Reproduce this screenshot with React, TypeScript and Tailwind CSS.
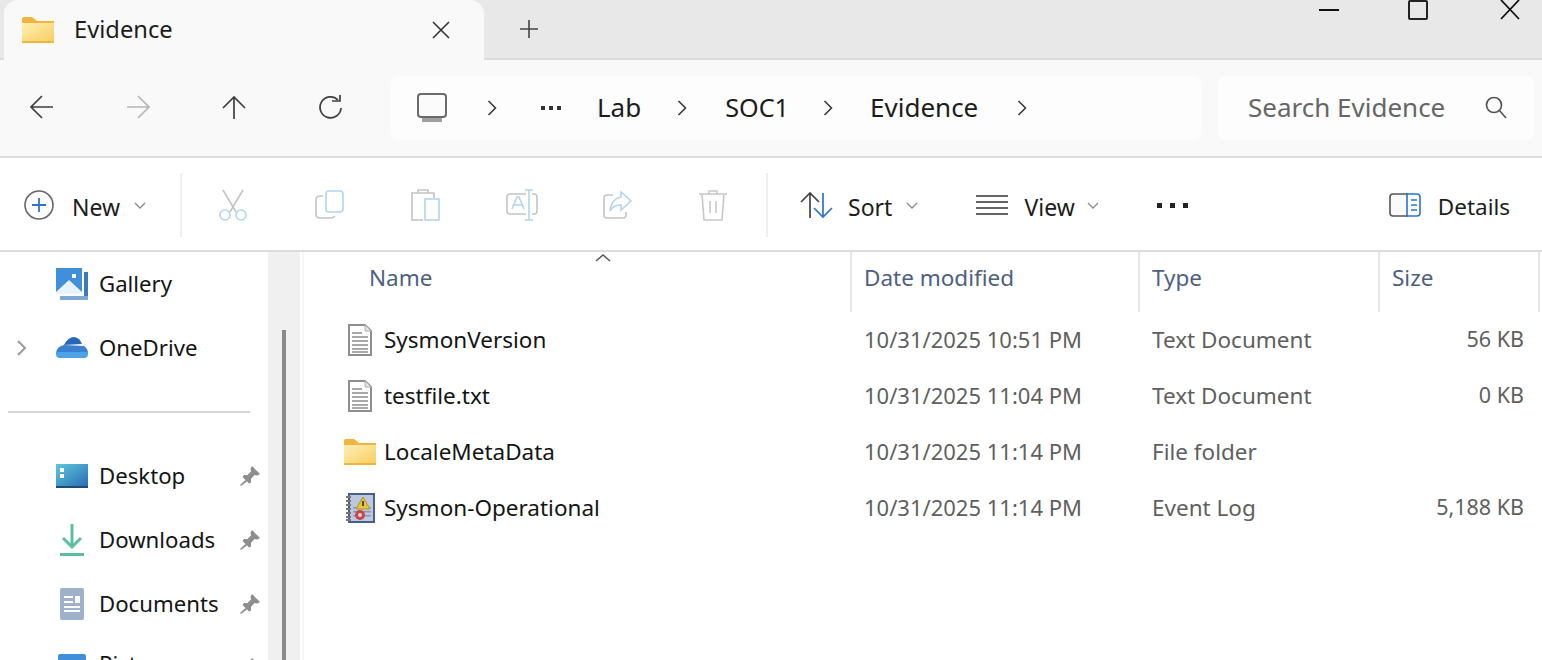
import React from "react";

const Chevron = ({ className = "" }: { className?: string }) => (
  <svg width="10" height="18" viewBox="0 0 10 18" className={className} fill="none" stroke="#3a3a3a" strokeWidth="1.6">
    <path d="M1.5 2 L8.5 9 L1.5 16" />
  </svg>
);

const Down = () => (
  <svg width="12" height="7" viewBox="0 0 12 7" fill="none" stroke="#8a8a8a" strokeWidth="1.3">
    <path d="M1 1 L6 6 L11 1" />
  </svg>
);

const Folder = () => (
  <svg width="32" height="26" viewBox="0 0 32 26">
    <defs>
      <linearGradient id="fg" x1="0" y1="0" x2="1" y2="1">
        <stop offset="0" stopColor="#fdeeb5" />
        <stop offset="1" stopColor="#f8cf62" />
      </linearGradient>
    </defs>
    <path d="M0 2 Q0 0 2 0 H10 L15 4 H32 V26 H0 Z" fill="#eeb53f" />
    <rect x="0" y="6" width="32" height="18" fill="url(#fg)" />
  </svg>
);

const TextFile = () => (
  <svg width="24" height="32" viewBox="0 0 24 32">
    <path d="M1 1 H17 L23 7 V31 H1 Z" fill="#fff" stroke="#8f8f8f" strokeWidth="2" />
    <path d="M17 1 V7 H23" fill="#e3e3e3" stroke="#b0b0b0" />
    {[8, 12, 16, 20, 24, 27].map((y) => (
      <rect key={y} x="4" y={y} width={y === 8 ? 10 : 16} height="2" fill="#a9a9a9" />
    ))}
  </svg>
);

const EventLog = () => (
  <svg width="30" height="30" viewBox="0 0 30 30">
    <rect x="4" y="1" width="25" height="28" fill="#bcc8e0" stroke="#4a5d8f" strokeWidth="2" />
    {[3, 7, 11, 15, 19, 23, 26].map((y) => (
      <rect key={y} x="1" y={y} width="5" height="2" fill="#777" />
    ))}
    {[14, 18, 22].map((y) => (
      <rect key={y} x="8" y={y} width="18" height="1.5" fill="#8796bb" />
    ))}
    <path d="M18 4 L25 16 H11 Z" fill="#e8c33c" stroke="#b3932a" />
    <rect x="17.2" y="8" width="1.6" height="5" fill="#333" />
    <circle cx="15" cy="22" r="5" fill="#c8434b" />
    <circle cx="15" cy="22" r="2" fill="#f1d5d6" />
  </svg>
);

const Pin = () => (
  <svg width="22" height="22" viewBox="0 0 22 22" fill="#8e8e8e">
    <path d="M13 1 L21 9 L18.5 10.5 L15.5 10 L12 14 L12 17.5 L10 18.5 L3.5 12 L5 10 L8.5 10 L12 6.5 L11.5 3.5 Z" />
    <path d="M6.5 15 L8 16.5 L2 21 L1 20 Z" />
  </svg>
);

const SideRow = ({ icon, label, chevron, pin, labelClass = "" }: { icon: React.ReactNode; label: string; chevron?: boolean; pin?: boolean; labelClass?: string }) => (
  <div className="flex h-[64px] items-center">
    <div className="flex w-[56px] justify-center pl-[8px] pr-[20px]">
      {chevron && (
        <svg width="12" height="18" viewBox="0 0 12 18" fill="none" stroke="#9a9a9a" strokeWidth="2" className="shrink-0">
          <path d="M2 2 L9 9 L2 16" />
        </svg>
      )}
    </div>
    <div className="flex w-[32px] shrink-0 justify-center">{icon}</div>
    <span className={`ml-[11px] text-[22.2px] text-[#141414] ${labelClass}`}>{label}</span>
    {pin && (
      <span className="ml-auto mr-[7px] flex">
        <Pin />
      </span>
    )}
  </div>
);

const ToolSlot = ({ children, className = "" }: { children: React.ReactNode; className?: string }) => (
  <div className={`flex h-[36px] w-[40px] items-center justify-center ${className}`}>{children}</div>
);

const rows = [
  { icon: <TextFile />, name: "SysmonVersion", date: "10/31/2025 10:51 PM", type: "Text Document", size: "56 KB" },
  { icon: <TextFile />, name: "testfile.txt", date: "10/31/2025 11:04 PM", type: "Text Document", size: "0 KB" },
  { icon: <Folder />, name: "LocaleMetaData", date: "10/31/2025 11:14 PM", type: "File folder", size: "" },
  { icon: <EventLog />, name: "Sysmon-Operational", date: "10/31/2025 11:14 PM", type: "Event Log", size: "5,188 KB" },
];

export default function App() {
  return (
    <div className="flex h-[660px] w-[1542px] flex-col overflow-hidden bg-white font-['Noto_Sans',sans-serif] text-[22.5px] leading-[30px] text-[#1c1c1c]">
      {/* Tab strip */}
      <div className="flex h-[60px] shrink-0 items-start border-b-2 border-[#dcdcdc] bg-[#e8e8e8]">
        <div className="ml-[4px] flex h-[60px] w-[480px] items-center rounded-t-[14px] bg-[#f9f9f9] pl-[18px]">
          <Folder />
          <span className="ml-[20px] pb-[2px] text-[23.7px]">Evidence</span>
          <svg width="20" height="20" viewBox="0 0 20 20" className="ml-auto mr-[33px]" fill="none" stroke="#333" strokeWidth="1.6">
            <path d="M2 2 L18 18 M18 2 L2 18" />
          </svg>
        </div>
        <svg width="20" height="20" viewBox="0 0 20 20" className="ml-[35px] mt-[19px]" fill="none" stroke="#444" strokeWidth="1.6">
          <path d="M10 1 V19 M1 10 H19" />
        </svg>
        <div className="ml-auto flex h-[20px] items-start">
          <div className="mt-[9px] h-[2px] w-[20px] bg-[#111]" />
          <div className="ml-[69px] h-[20px] w-[20px] rounded-[2px] border-2 border-[#222]" />
          <svg width="20" height="20" viewBox="0 0 20 20" className="ml-[72px] mr-[22px]" fill="none" stroke="#111" strokeWidth="1.8">
            <path d="M1 0 L19 19 M19 0 L1 19" />
          </svg>
        </div>
      </div>

      {/* Navigation */}
      <div className="flex h-[98px] shrink-0 items-center border-b-2 border-[#dcdcdc] bg-[#f9f9f9] pl-[18px] text-[26px]">
        {[
          <path key="a" d="M2 12 H24 M13 1 L2 12 L13 23" />,
          <path key="b" d="M2 12 H24 M13 1 L24 12 L13 23" stroke="#b5b5b5" />,
          <path key="c" d="M13 24 V2 M2 13 L13 2 L24 13" />,
          <g key="d">
            <path d="M21 5 A10.5 10.5 0 1 0 24 13" />
            <path d="M15 5 H23 V-1" transform="translate(0 1)" />
          </g>,
        ].map((icon, i) => (
          <div key={i} className={`flex h-[48px] w-[48px] items-center justify-center ${i < 3 ? "mr-[48px]" : ""}`}>
            <svg width="26" height="26" viewBox="0 0 26 26" fill="none" stroke="#3f3f3f" strokeWidth="1.7">
              {icon}
            </svg>
          </div>
        ))}
        <div className="ml-[36px] flex h-[64px] w-[812px] items-center rounded-[8px] bg-[#fdfdfd] pl-[27px]">
          <svg width="30" height="30" viewBox="0 0 30 30" fill="none">
            <rect x="1" y="1" width="28" height="23" rx="3" stroke="#6a6a6a" strokeWidth="2" fill="#fbfbfb" />
            <rect x="5" y="25" width="20" height="4" fill="#a0a0a0" />
          </svg>
          <Chevron className="ml-[40px]" />
          <span className="ml-[44px] flex gap-[4px]">
            {[0, 1, 2].map((d) => (
              <span key={d} className="h-[4px] w-[4px] bg-[#333]" />
            ))}
          </span>
          <span className="ml-[36px] pb-[2px]">Lab</span>
          <Chevron className="ml-[36px]" />
          <span className="ml-[38px] pb-[2px] text-[25.2px]">SOC1</span>
          <Chevron className="ml-[34px]" />
          <span className="ml-[37px] pb-[2px]">Evidence</span>
          <Chevron className="ml-[39px]" />
        </div>
        <div className="ml-[16px] flex h-[64px] w-[316px] items-center rounded-[8px] bg-[#fdfdfd] pl-[30px] text-[#666]">
          <span className="pb-[2px]">Search Evidence</span>
          <svg width="22" height="24" viewBox="0 0 22 24" className="ml-auto mr-[27px]" fill="none" stroke="#555" strokeWidth="1.7">
            <circle cx="9" cy="9" r="7.5" />
            <path d="M14 14 L21 22" />
          </svg>
        </div>
      </div>

      {/* Command bar */}
      <div className="flex h-[94px] shrink-0 items-center border-b-2 border-[#dcdcdc] bg-white pl-[24px] pt-[2px] text-[23px]">
        <svg width="30" height="30" viewBox="0 0 30 30" fill="none">
          <circle cx="15" cy="15" r="14" stroke="#666" strokeWidth="1.6" />
          <path d="M15 8 V22 M8 15 H22" stroke="#2b74d0" strokeWidth="1.8" />
        </svg>
        <span className="ml-[18px] mt-[4px]">New</span>
        <span className="ml-[14px] flex"><Down /></span>
        <div className="ml-[34px] mr-[31px] h-[64px] w-[2px] bg-[#efefef]" />
        <ToolSlot>
          <svg width="30" height="32" viewBox="0 0 30 32" fill="none" strokeWidth="1.6">
            <path d="M5 1 L18 23 M25 1 L12 23" stroke="#c4c4c4" />
            <circle cx="7" cy="26" r="5" stroke="#b4d3f1" />
            <circle cx="23" cy="26" r="5" stroke="#b4d3f1" />
          </svg>
        </ToolSlot>
        <ToolSlot className="ml-[57px]">
          <svg width="30" height="30" viewBox="0 0 30 30" fill="none" strokeWidth="1.6">
            <path d="M8 6 H5 Q1 6 1 10 V24 Q1 28 5 28 H15 Q18 28 20 26" stroke="#c4c4c4" />
            <rect x="11" y="1" width="17" height="21" rx="3" stroke="#b4d3f1" />
          </svg>
        </ToolSlot>
        <ToolSlot className="ml-[56px]">
          <svg width="30" height="32" viewBox="0 0 30 32" fill="none" strokeWidth="1.6">
            <path d="M12 31 H1 V4 H23 V9 M7 4 V1 H17 V4" stroke="#c4c4c4" />
            <rect x="14" y="10" width="14" height="21" stroke="#b4d3f1" />
          </svg>
        </ToolSlot>
        <ToolSlot className="ml-[56px]">
          <svg width="32" height="32" viewBox="0 0 32 32" fill="none" strokeWidth="1.6">
            <path d="M20 5 H4 Q1 5 1 8 V22 Q1 25 4 25 H20 M26 5 H28 Q31 5 31 8 V22 Q31 25 28 25 H26" stroke="#c4c4c4" />
            <path d="M19 1 H27 M23 1 V31 M19 31 H27 M6 20 L11 8 H13 L18 20 M8 16 H16" stroke="#b4d3f1" />
          </svg>
        </ToolSlot>
        <ToolSlot className="ml-[56px]">
          <svg width="30" height="30" viewBox="0 0 30 30" fill="none" strokeWidth="1.6">
            <path d="M10 5 H4 Q1 5 1 8 V25 Q1 28 4 28 H20 Q23 28 23 25 V22" stroke="#c4c4c4" />
            <path d="M18 2 L28 11 L18 20 V15 Q10 15 7 21 Q8 9 18 7 Z" stroke="#b4d3f1" />
          </svg>
        </ToolSlot>
        <ToolSlot className="ml-[55px]">
          <svg width="30" height="32" viewBox="0 0 30 32" fill="none" stroke="#c8c8c8" strokeWidth="1.6">
            <path d="M1 5 H29 M11 5 V2 H19 V5 M4 5 L6 31 H24 L26 5 M12 12 V24 M18 12 V24" />
          </svg>
        </ToolSlot>
        <div className="ml-[33px] mr-[32px] h-[64px] w-[2px] bg-[#efefef]" />
        <svg width="34" height="28" viewBox="0 0 34 28" fill="none" strokeWidth="1.7">
          <path d="M10 27 V2 M1 11 L10 2 L19 11" stroke="#444" />
          <path d="M23 2 V26 M14 17 L23 26 L32 17" stroke="#2b74d0" />
        </svg>
        <span className="ml-[14px] mt-[4px]">Sort</span>
        <span className="ml-[14px] flex"><Down /></span>
        <svg width="32" height="22" viewBox="0 0 32 22" className="ml-[58px]" stroke="#333" strokeWidth="1.6">
          <path d="M0 2 H32 M0 8 H32 M0 14 H32 M0 20 H32" />
        </svg>
        <span className="ml-[16px] mt-[4px]">View</span>
        <span className="ml-[12px] flex"><Down /></span>
        <span className="ml-[58px] flex gap-[8px]">
          {[0, 1, 2].map((d) => (
            <span key={d} className="h-[5px] w-[5px] bg-[#222]" />
          ))}
        </span>
        <svg width="32" height="24" viewBox="0 0 32 24" className="ml-[201px]" fill="none" strokeWidth="1.6">
          <path d="M19 1 H4 Q1 1 1 4 V20 Q1 23 4 23 H19" stroke="#555" fill="#fafafa" />
          <path d="M18 1 H28 Q31 1 31 4 V20 Q31 23 28 23 H18 Z" stroke="#2b74d0" />
          <path d="M22 7 H28 M22 12 H28 M22 17 H28" stroke="#2b74d0" />
        </svg>
        <span className="ml-[17px] mt-[4px] text-[22.5px]">Details</span>
      </div>

      {/* Body */}
      <div className="flex min-h-0 flex-1">
        <aside className="w-[268px] shrink-0">
          <SideRow
            label="Gallery"
            icon={
              <svg width="32" height="32" viewBox="0 0 32 32">
                <rect x="0" y="0" width="26" height="26" fill="#3f8fdb" />
                <rect x="28" y="4" width="4" height="28" fill="#3b78bf" />
                <rect x="4" y="28" width="28" height="4" fill="#7ea7d4" />
                <path d="M0 24 L13 12 L26 24 V26 H0 Z" fill="#eaf3fc" />
                <rect x="16" y="6" width="4" height="4" fill="#fff" />
              </svg>
            }
          />
          <SideRow
            label="OneDrive"
            chevron
            icon={
              <svg width="32" height="22" viewBox="0 0 32 22">
                <path d="M8 8 Q12 0 18 0 Q24 1 26 7 Z" fill="#2a66b8" />
                <path d="M0 16 Q1 9 8 8 L28 9 Q32 12 32 16 Z" fill="#3b80cf" />
                <path d="M0 15 H32 V17 Q32 21 28 21 H4 Q0 21 0 17 Z" fill="#4ea2e6" />
              </svg>
            }
          />
          <div className="mt-[31px] ml-[8px] h-[2px] w-[242px] bg-[#d4d4d4]" />
          <div className="h-[31px]" />
          <SideRow
            label="Desktop"
            pin
            icon={
              <svg width="32" height="24" viewBox="0 0 32 24">
                <defs>
                  <linearGradient id="dk" x1="0" y1="0" x2="1" y2="1">
                    <stop offset="0" stopColor="#5ec8dc" />
                    <stop offset="1" stopColor="#2a6db5" />
                  </linearGradient>
                </defs>
                <rect width="32" height="22" y="0" fill="url(#dk)" />
                <rect y="22" width="32" height="2" fill="#1f4d6e" />
                <rect x="4" y="4" width="4" height="4" fill="#fff" />
                <rect x="4" y="10" width="4" height="4" fill="#fff" />
              </svg>
            }
          />
          <SideRow
            label="Downloads"
            pin
            icon={
              <svg width="24" height="32" viewBox="0 0 24 32" fill="none" stroke="#5bbf9c" strokeWidth="3">
                <path d="M12 0 V23 M3 14 L12 23 L21 14 M0 30.5 H24" />
              </svg>
            }
          />
          <SideRow
            label="Documents"
            pin
            icon={
              <svg width="24" height="32" viewBox="0 0 24 32">
                <rect width="24" height="32" rx="2" fill="#9fb0cb" />
                <path d="M4 9 H13 M4 14 H13 M4 19 H20 M4 23 H20" stroke="#fff" strokeWidth="2" />
                <rect x="15" y="8" width="5" height="7" fill="#fff" />
              </svg>
            }
          />
          <SideRow
            label="Pictures"
            pin
            labelClass="pb-[8px]"
            icon={<div className="h-[28px] w-[28px] rounded-[2px] bg-[#3f8fdb]" />}
          />
        </aside>

        <div className="flex w-[32px] shrink-0 justify-center bg-[#f0f0f0]">
          <div className="mt-[78px] h-[400px] w-[4px] bg-[#8a8a8a]" />
        </div>
        <div className="w-[4px] shrink-0 border-r-2 border-[#f6f6f6]" />

        <main className="min-w-0 flex-1">
          <div className="relative flex h-[60px] items-center text-[#4d6082]">
            <svg width="16" height="8" viewBox="0 0 16 8" className="absolute left-[291px] top-[2px]" fill="none" stroke="#555" strokeWidth="1.5">
              <path d="M1 7 L8 1 L15 7" />
            </svg>
            <div className="flex h-full w-[548px] items-center border-r-2 border-[#e6e6e6] pl-[65px] pb-[8px]">Name</div>
            <div className="flex h-full w-[288px] items-center border-r-2 border-[#e6e6e6] pl-[12px] pb-[8px]">Date modified</div>
            <div className="flex h-full w-[240px] items-center border-r-2 border-[#e6e6e6] pl-[12px] pb-[8px]">Type</div>
            <div className="flex h-full w-[160px] items-center border-r-2 border-[#e6e6e6] pl-[12px] pb-[8px]">Size</div>
          </div>
          {rows.map((r) => (
            <div key={r.name} className="flex h-[56px] items-center text-[#5f5f5f]">
              <div className="flex w-[546px] items-center">
                <div className="flex w-[78px] shrink-0 justify-center pl-[34px]">{r.icon}</div>
                <span className="ml-[2px] text-[#141414]">{r.name}</span>
              </div>
              <div className="w-[288px] pb-[2px] pl-[14px] text-[22px]">{r.date}</div>
              <div className="w-[240px] pl-[14px]">{r.type}</div>
              <div className="w-[146px] pb-[2px] text-right text-[21.5px]">{r.size}</div>
            </div>
          ))}
        </main>
      </div>
    </div>
  );
}
